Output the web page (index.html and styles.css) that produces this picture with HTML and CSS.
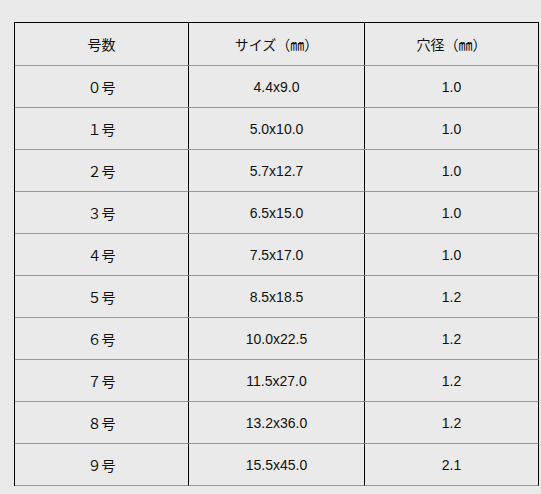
FILE: index.html
```html
<!DOCTYPE html>
<html lang="ja">
<head>
<meta charset="utf-8">
<link rel="stylesheet" href="styles.css">
</head>
<body>
<div class="wrap">
<table class="spec">
<colgroup><col class="c1"><col class="c2"><col class="c3"></colgroup>
<thead>
<tr><th>号数</th><th>サイズ（㎜）</th><th>穴径（㎜）</th></tr>
</thead>
<tbody>
<tr><td>０号</td><td>4.4x9.0</td><td>1.0</td></tr>
<tr><td>１号</td><td>5.0x10.0</td><td>1.0</td></tr>
<tr><td>２号</td><td>5.7x12.7</td><td>1.0</td></tr>
<tr><td>３号</td><td>6.5x15.0</td><td>1.0</td></tr>
<tr><td>４号</td><td>7.5x17.0</td><td>1.0</td></tr>
<tr><td>５号</td><td>8.5x18.5</td><td>1.2</td></tr>
<tr><td>６号</td><td>10.0x22.5</td><td>1.2</td></tr>
<tr><td>７号</td><td>11.5x27.0</td><td>1.2</td></tr>
<tr><td>８号</td><td>13.2x36.0</td><td>1.2</td></tr>
<tr><td>９号</td><td>15.5x45.0</td><td>2.1</td></tr>
</tbody>
</table>
</div>
</body>
</html>
```
FILE: styles.css
```css
html, body {
  margin: 0;
  background: #eaeaea;
}
.wrap {
  padding: 22px 0 0 14px;
}
.spec {
  border-collapse: separate;
  border-spacing: 0;
  table-layout: fixed;
  width: 525px;
  border-top: 1px solid #000;
  border-left: 1px solid #000;
  font-family: "Liberation Sans", "Noto Sans CJK JP", sans-serif;
  font-size: 14px;
  color: #111;
}
.c1 { width: 174px; }
.c2 { width: 176px; }
.c3 { width: 174px; }
.spec th, .spec td {
  box-sizing: border-box;
  padding: 0;
  text-align: center;
  vertical-align: middle;
  font-weight: normal;
  border-right: 1px solid #000;
  border-bottom: 1px solid #999;
}
.spec th { height: 43px; }
.spec td { height: 42px; }
```
